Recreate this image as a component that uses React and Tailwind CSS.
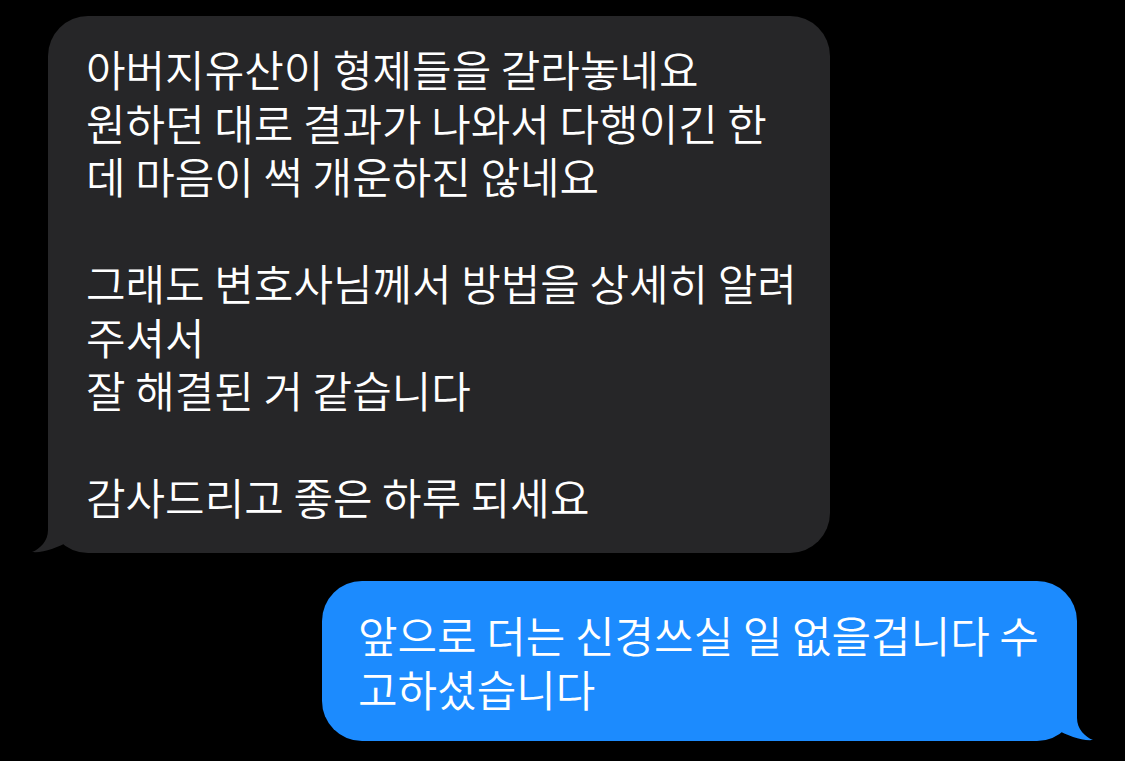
import React from "react";

function Lines({ lines }) {
  return lines.map((l, i) => (
    <div key={i} className="whitespace-pre">
      {l === "" ? "\u00a0" : l}
    </div>
  ));
}

export default function App() {
  const received = [
    "아버지유산이 형제들을 갈라놓네요",
    "원하던 대로 결과가 나와서 다행이긴 한",
    "데 마음이 썩 개운하진 않네요",
    "",
    "그래도 변호사님께서 방법을 상세히 알려",
    "주셔서",
    "잘 해결된 거 같습니다",
    "",
    "감사드리고 좋은 하루 되세요",
  ];
  const sent = ["앞으로 더는 신경쓰실 일 없을겁니다 수", "고하셨습니다"];

  return (
    <div
      className="w-[1125px] h-[761px] bg-black overflow-hidden flex flex-col pt-[16px]"
      style={{ fontFamily: '"Noto Sans CJK KR", "Noto Sans", sans-serif' }}
    >
      <div className="relative ml-[48px] w-[782px] h-[537px] rounded-[40px] bg-[#262628] text-white text-[43px] font-[350] leading-[53.5px] pl-[38px] pt-[26px]">
        <Lines lines={received} />
        <svg
          className="absolute left-[-16px] bottom-0"
          width="40"
          height="50"
          viewBox="0 0 40 50"
        >
          <path
            d="M16 0 L16 27 C16 38 8 46 0 49 C12 50 24 45 38 38 L38 0 Z"
            fill="#262628"
          />
        </svg>
      </div>

      <div className="relative mt-[28px] ml-[322px] w-[755px] h-[160px] rounded-[40px] bg-[#1c8bfe] text-white text-[43px] font-[350] leading-[53.5px] pl-[36px] pt-[27px]">
        <Lines lines={sent} />
        <svg
          className="absolute right-[-16px] bottom-0"
          width="40"
          height="50"
          viewBox="0 0 40 50"
        >
          <path
            d="M24 0 L24 27 C24 38 32 46 40 49 C28 50 16 45 2 38 L2 0 Z"
            fill="#1c8bfe"
          />
        </svg>
      </div>
    </div>
  );
}
